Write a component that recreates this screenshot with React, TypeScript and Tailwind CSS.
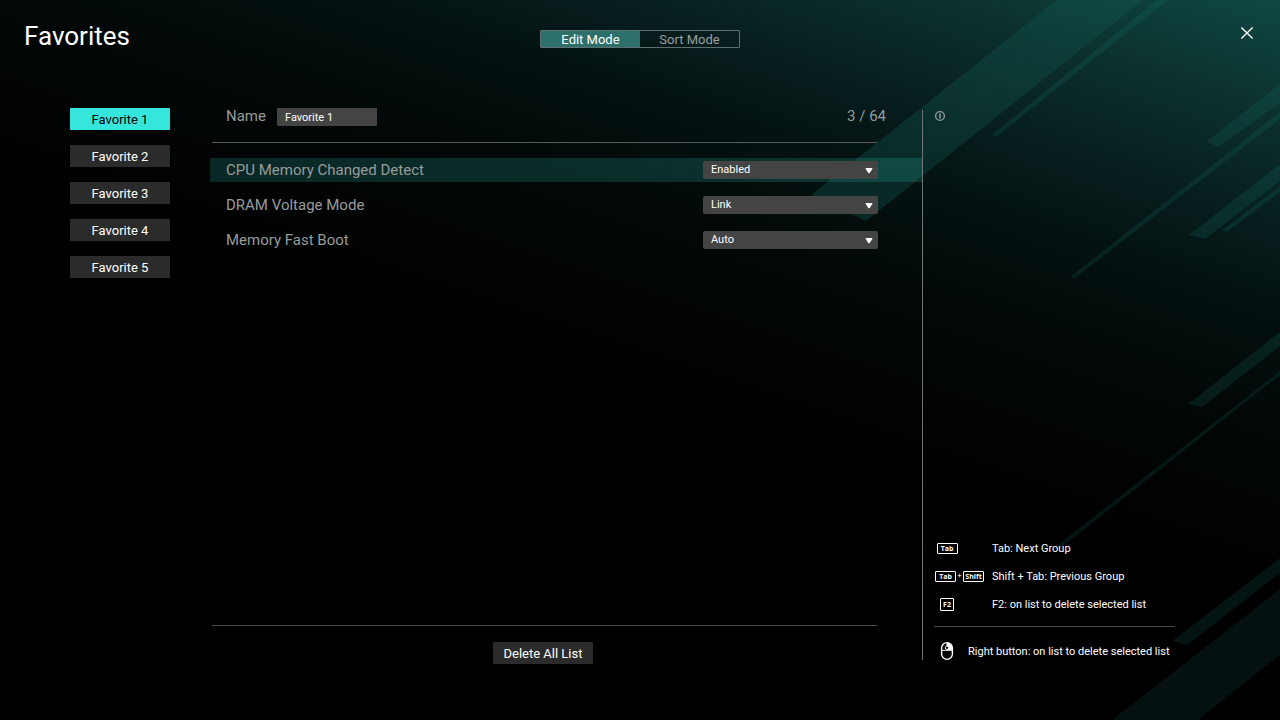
import { useState } from 'react';

const favorites = ['Favorite 1', 'Favorite 2', 'Favorite 3', 'Favorite 4', 'Favorite 5'];

const settings = [
  { id: 'cpu-memory', label: 'CPU Memory Changed Detect', options: ['Enabled', 'Disabled'] },
  { id: 'dram-voltage', label: 'DRAM Voltage Mode', options: ['Link', 'Unlink'] },
  { id: 'fast-boot', label: 'Memory Fast Boot', options: ['Auto', 'Enabled', 'Disabled'] },
];

function Background() {
  return (
    <svg
      className="absolute inset-0 -z-10 h-full w-full"
      viewBox="0 0 1280 720"
      preserveAspectRatio="xMaxYMin slice"
      aria-hidden="true"
    >
      <defs>
        <linearGradient id="glow" gradientUnits="userSpaceOnUse" x1="1280" y1="0" x2="1100" y2="540">
          <stop offset="0" stopColor="#0f4843" />
          <stop offset="0.2" stopColor="#0b302d" />
          <stop offset="0.38" stopColor="#061d1d" />
          <stop offset="0.5" stopColor="#041312" />
          <stop offset="0.7" stopColor="#020807" />
          <stop offset="1" stopColor="#000000" />
        </linearGradient>
        <linearGradient id="beam" gradientUnits="userSpaceOnUse" x1="1100" y1="0" x2="840" y2="208">
          <stop offset="0" stopColor="#1a7a6e" stopOpacity="0.16" />
          <stop offset="1" stopColor="#1a7a6e" stopOpacity="0.24" />
        </linearGradient>
      </defs>
      <rect width="1280" height="720" fill="url(#glow)" />
      <polygon points="1057,0 1143,0 866,221 811,195" fill="url(#beam)" />
      <g fill="#1a7a6e">
        <polygon points="1157,0 1168,0 996,137 992,135" fillOpacity="0.2" />
        <polygon points="1280,84 1280,103 1218,147 1206,142" fillOpacity="0.18" />
        <polygon points="1280,112 1280,119 1075,278 1070,277" fillOpacity="0.18" />
        <polygon points="1280,164 1280,181 1205,239 1189,235" fillOpacity="0.2" />
        <polygon points="1280,186 1280,192 1227,232 1222,230" fillOpacity="0.2" />
        <polygon points="1280,332 1280,346 1202,407 1188,404" fillOpacity="0.18" />
        <polygon points="1280,371 1280,375 1062,547 1055,547" fillOpacity="0.16" />
        <polygon points="1280,558 1280,573 1187,645 1172,641" fillOpacity="0.16" />
        <polygon points="1280,589 1280,655 1198,720 1112,720" fillOpacity="0.14" />
      </g>
    </svg>
  );
}

function Key({ children, square }: { children: string; square?: boolean }) {
  return (
    <kbd
      className={
        square
          ? "flex h-[13px] w-[14px] items-center justify-center rounded-[1px] border border-white font-['Open_Sans',sans-serif] text-[7px] leading-none font-bold"
          : "flex h-[11px] w-[21px] items-center justify-center rounded-[1px] border border-white font-['Open_Sans',sans-serif] text-[7px] leading-none font-bold"
      }
    >
      {children}
    </kbd>
  );
}

function MouseIcon() {
  return (
    <svg width="14" height="20" viewBox="0 0 14 20" fill="none" aria-hidden="true">
      <rect x="1.6" y="1.6" width="10.8" height="16.8" rx="5.4" stroke="#fff" strokeWidth="1.4" />
      <path d="M7 1.5a5.5 5.5 0 0 1 5.4 5.5v2.8H7z" fill="#fff" />
      <path d="M2 9.3h5" stroke="#fff" strokeWidth="1" />
      <path d="M7 2v3" stroke="#fff" strokeWidth="1" />
      <circle cx="7" cy="6.8" r="1.7" fill="#000" stroke="#fff" strokeWidth="1" />
    </svg>
  );
}

export default function App() {
  const [active, setActive] = useState(0);
  const [mode, setMode] = useState('edit');
  const [selected, setSelected] = useState('cpu-memory');

  return (
    <div className="relative isolate flex min-h-screen flex-col bg-black pb-14 font-[Roboto,'Liberation_Sans',sans-serif] text-white">
      <Background />

      <header className="grid grid-cols-3 items-start px-6 pt-[18px]">
        <h1 className="text-[26px] leading-9">Favorites</h1>
        <div className="mt-3 flex h-[18px] w-[200px] justify-self-center rounded-[1px] border border-[#5d6f6e] text-[13px] leading-4">
          <button
            type="button"
            onClick={() => setMode('edit')}
            className={mode === 'edit' ? 'flex-1 bg-[#2d6f6a] pt-px' : 'flex-1 pt-px text-[#9a9f9f]'}
          >
            Edit Mode
          </button>
          <button
            type="button"
            onClick={() => setMode('sort')}
            className={mode === 'sort' ? 'flex-1 bg-[#2d6f6a] pt-px' : 'flex-1 pt-px text-[#9a9f9f]'}
          >
            Sort Mode
          </button>
        </div>
        <button type="button" aria-label="Close" className="-mr-[3px] mt-[3px] size-6 justify-self-end">
          <svg viewBox="0 0 24 24" stroke="#fff" strokeWidth="1.4" aria-hidden="true">
            <path d="M6.4 6.4l11.2 11.2M17.6 6.4L6.4 17.6" />
          </svg>
        </button>
      </header>

      <div className="mt-[54px] flex flex-1">
        {/* Favorite lists */}
        <nav className="mr-10 ml-[70px] flex w-[100px] flex-col gap-[15px]">
          {favorites.map((name, i) => (
            <button
              key={name}
              type="button"
              onClick={() => setActive(i)}
              className={
                i === active
                  ? 'h-[22px] rounded-[1px] bg-[#36e6dc] pt-0.5 text-[13px] leading-5 text-black'
                  : 'h-[22px] rounded-[1px] bg-[#2b2b2b] pt-0.5 text-[13px] leading-5'
              }
            >
              {name}
            </button>
          ))}
        </nav>

        <main className="flex flex-1 flex-col text-[15px] text-[#979b9b]">
          <div className="flex h-[18px] items-center pr-9 pl-4 leading-4">
            <label htmlFor="list-name" className="w-[51px] pb-0.5">Name</label>
            <input
              id="list-name"
              defaultValue="Favorite 1"
              className="h-[18px] w-[100px] rounded-[1px] bg-[#444444] px-2 text-[11px] text-white"
            />
            <span className="ml-auto pb-0.5">3 / 64</span>
          </div>
          <hr className="mt-4 mr-[45px] ml-0.5 border-[#555b5b]" />

          <div className="mt-[15px] flex flex-1 flex-col gap-[11px]">
            {settings.map((s) => (
              <div
                key={s.id}
                onClick={() => setSelected(s.id)}
                className={
                  s.id === selected
                    ? 'flex h-6 items-center justify-between bg-[#30cfc0]/18 pr-11 pl-4'
                    : 'flex h-6 items-center justify-between pr-11 pl-4'
                }
              >
                <label htmlFor={s.id}>{s.label}</label>
                <div className="relative h-[18px]">
                  <select
                    id={s.id}
                    className="block h-[18px] w-[175px] appearance-none rounded-[2px] bg-[#444444] px-2 text-[11px] leading-4 text-white"
                  >
                    {s.options.map((o) => (
                      <option key={o}>{o}</option>
                    ))}
                  </select>
                  <svg
                    className="pointer-events-none absolute top-[7px] right-[5px]"
                    width="8"
                    height="6"
                    viewBox="0 0 8 6"
                    fill="#fff"
                    aria-hidden="true"
                  >
                    <path d="M1.2 0h5.6q1 0 .5.9L4.7 4.9q-.7.8-1.4 0L.7.9Q.2 0 1.2 0z" />
                  </svg>
                </div>
              </div>
            ))}
          </div>

          <hr className="mr-[45px] ml-0.5 border-[#4a4a4a]" />
          <div className="mt-4 mr-[46px] flex justify-center">
            <button type="button" className="h-[22px] w-[100px] rounded-[1px] bg-[#2b2b2b] pt-0.5 text-[13px] leading-5 text-white">
              Delete All List
            </button>
          </div>
        </main>

        {/* Help panel */}
        <aside className="mt-0.5 mb-1 flex w-[358px] flex-col border-l border-[#6f7675] pr-[105px] pl-[11px] text-[11px]">
          <svg width="12" height="12" viewBox="0 0 12 12" fill="none" stroke="#8d9998" aria-hidden="true">
            <circle cx="6" cy="6" r="4.4" strokeWidth="1.4" />
            <path d="M6 3.6v4.8" strokeWidth="1.6" />
          </svg>

          <ul className="mt-auto">
            <li className="flex h-7 items-center">
              <span className="flex w-[58px]">
                <span className="flex w-[26px] justify-center"><Key>Tab</Key></span>
              </span>
              <span className="pt-0.5">Tab: Next Group</span>
            </li>
            <li className="flex h-7 items-center">
              <span className="flex w-[58px] items-center pl-px text-[8px] leading-none">
                <Key>Tab</Key>
                <span className="w-[7px] text-center">+</span>
                <Key>Shift</Key>
              </span>
              <span className="pt-0.5">Shift + Tab: Previous Group</span>
            </li>
            <li className="flex h-7 items-center">
              <span className="flex w-[58px]">
                <span className="flex w-[26px] justify-center"><Key square>F2</Key></span>
              </span>
              <span className="pt-0.5">F2: on list to delete selected list</span>
            </li>
          </ul>
          <hr className="mt-2 border-[#4a4a4a]" />
          <div className="mt-[15px] flex h-[18px] items-center">
            <span className="flex w-[34px] pl-1.5"><MouseIcon /></span>
            <span className="pt-0.5">Right button: on list to delete selected list</span>
          </div>
        </aside>
      </div>
    </div>
  );
}
